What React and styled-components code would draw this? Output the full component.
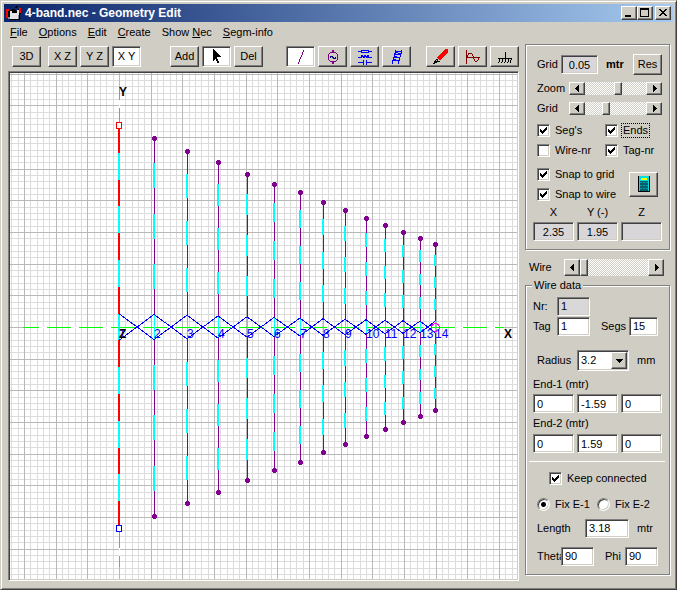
import React from 'react'
import styled, { createGlobalStyle, css } from 'styled-components'

const face = '#d0cdc5'
const shadow = '#808080'
const dark = '#404040'

const GlobalStyle = createGlobalStyle`
    * {
        box-sizing: border-box;
    }

    body {
        margin: 0;
        background: ${face};
        color: #000;
        font-family: 'Liberation Sans', Arial, sans-serif;
        font-size: 11px;
        line-height: 13px;
    }

    button, input, select {
        font: inherit;
        color: inherit;
        margin: 0;
        padding: 0;
        border-radius: 0;
    }
`

const raised = css`
    border: 1px solid;
    border-color: #fff ${dark} ${dark} #fff;
    box-shadow: inset -1px -1px 0 ${shadow};
    background: ${face};
`

const sunken = css`
    border: 1px solid;
    border-color: ${shadow} #fff #fff ${shadow};
    box-shadow: inset 1px 1px 0 ${dark}, inset -1px -1px 0 ${face};
`

const Window = styled.main`
    min-height: 100vh;
    padding: 2px;
    background: ${face};
    border: 1px solid;
    border-color: ${face} ${dark} ${dark} ${face};
    box-shadow: inset 1px 1px 0 #fff, inset -1px -1px 0 ${shadow};
`

const TitleBar = styled.header`
    display: flex;
    align-items: center;
    gap: 3px;
    height: 18px;
    margin: 1px;
    padding: 0 2px;
    background: linear-gradient(to right, #0a246a, #a6caf0);
    color: #fff;

    h1 {
        flex: 1;
        margin: 0;
        font-size: 12px;
        line-height: 18px;
    }
`

const CaptionButtons = styled.div`
    display: flex;

    button:last-child {
        margin-left: 2px;
    }
`

const CaptionButton = styled.button`
    ${raised}
    display: flex;
    width: 16px;
    height: 14px;
`

const MenuBar = styled.nav`
    display: flex;
    align-items: center;
    gap: 11px;
    height: 18px;
    padding: 0 7px;
    margin-bottom: 2px;

    a {
        color: inherit;
        text-decoration: none;
    }
`

const Body = styled.div`
    display: flex;
    align-items: flex-start;
    gap: 6px;
    padding: 1px 4px 6px 5px;
`

const Editor = styled.div`
    flex: 1;
    display: flex;
    flex-direction: column;
    gap: 4px;
    min-width: 0;
    padding-top: 2px;
`

const Toolbar = styled.div`
    display: flex;
    gap: 23px;
    padding-left: 4px;

    > :first-child {
        margin-right: 6px;
    }

    > :last-child {
        margin-left: auto;
    }
`

const Group = styled.div`
    display: flex;
    gap: ${p => p.$gap || 3}px;
`

const ToolButton = styled.button`
    ${raised}
    display: flex;
    align-items: center;
    justify-content: center;
    width: 29px;
    height: ${p => (p.$tall ? 25 : 21)}px;
    ${p =>
        p.$pressed &&
        css`
            ${sunken}
            background: #fff;
        `}
`

const View = styled.div`
    ${sunken}
    padding: 1px;
    background: #fff;

    svg {
        display: block;
        width: 100%;
    }
`

const Sidebar = styled.aside`
    flex: 0 0 145px;
    display: flex;
    flex-direction: column;
`

const Panel = styled.section`
    border: 1px solid ${shadow};
    box-shadow: 1px 1px 0 #fff, inset 1px 1px 0 #fff;
    padding: 9px 7px 8px;
`

const DataPanel = styled.fieldset`
    min-width: 0;
    margin: 2px 0 0;
    padding: 4px 7px 8px;
    border: 1px solid ${shadow};
    box-shadow: 1px 1px 0 #fff, inset 1px 1px 0 #fff;

    legend {
        padding: 0 2px;
        margin-left: -1px;
        background: ${face};
    }
`

const Row = styled.div`
    display: flex;
    align-items: center;
    gap: ${p => p.$gap || 0}px;
    height: ${p => p.$h || 20}px;
    margin-top: ${p => p.$top || 0}px;
    padding-left: ${p => p.$indent || 0}px;
    white-space: nowrap;
`

const Label = styled.label`
    flex: 0 0 ${p => (p.$w ? p.$w + 'px' : 'auto')};
    min-width: 0;
`

const Unit = styled.span`
    flex: 1;
    padding-left: 8px;
    font-weight: ${p => (p.$bold ? 'bold' : 'normal')};
`

const Readout = styled.output`
    ${sunken}
    display: block;
    width: ${p => p.$w || 41}px;
    height: 19px;
    background: #d8d6d8;
    line-height: 18px;
    text-align: center;
`

const Field = styled.input`
    ${sunken}
    width: ${p => p.$w || 41}px;
    height: 19px;
    padding: 0 3px;
    background: ${p => (p.readOnly ? '#d8d8d8' : '#fff')};
    outline: none;
`

const Triple = styled.div`
    display: grid;
    grid-template-columns: repeat(3, 41px);
    gap: 3px;
    margin-top: ${p => p.$top || 0}px;
    text-align: center;
`

const Check = styled.label`
    display: flex;
    align-items: center;
    gap: 4px;
    flex: 0 0 ${p => (p.$w ? p.$w + 'px' : 'auto')};

    input {
        ${sunken}
        appearance: none;
        width: 13px;
        height: 13px;
        background: #fff;
    }

    input:checked {
        background: #fff
            url("data:image/svg+xml,%3Csvg xmlns='http://www.w3.org/2000/svg' width='11' height='11' shape-rendering='crispEdges'%3E%3Cpath d='M2 4h1v3h-1zM3 5h1v3h-1zM4 6h1v3h-1zM5 5h1v3h-1zM6 4h1v3h-1zM7 3h1v3h-1zM8 2h1v3h-1z'/%3E%3C/svg%3E");
    }

    input[type='radio'] {
        border-radius: 50%;
    }

    input[type='radio']:checked {
        background: radial-gradient(circle, #000 0 2px, #fff 3px);
    }

    span {
        padding: 0 1px;
        outline: ${p => (p.$focused ? '1px dotted #000' : 'none')};
    }
`

const Scroll = styled.div`
    display: flex;
    width: ${p => p.$w}px;
    height: ${p => p.$h}px;

    button {
        ${raised}
        display: flex;
        align-items: center;
        justify-content: center;
        flex: 0 0 16px;
    }

    input {
        appearance: none;
        flex: 1;
        min-width: 0;
        height: 100%;
        background: repeating-conic-gradient(#fff 0 25%, ${face} 0 50%) 0 0 / 2px 2px;
    }

    input::-webkit-slider-thumb {
        ${raised}
        appearance: none;
        width: 8px;
        height: ${p => p.$h}px;
        border-radius: 0;
    }
`

const Combo = styled.div`
    ${sunken}
    display: flex;
    width: 52px;
    height: 21px;
    padding: 1px;
    background: #fff;

    select {
        appearance: none;
        flex: 1;
        min-width: 0;
        padding-left: 2px;
        border: 0;
        background: none;
        outline: none;
    }
`

const ComboArrow = styled.span`
    ${raised}
    display: flex;
    align-items: center;
    justify-content: center;
    width: 16px;
    pointer-events: none;
`

const Divider = styled.hr`
    width: 136px;
    margin: 8px -4px 6px;
    border: 0;
    border-top: 1px solid #fff;
`

const Icon = ({ w = 16, h = 16, children }) => (
    <svg width={w} height={h} viewBox={`0 0 ${w} ${h}`} fill="none" shapeRendering="crispEdges" aria-hidden="true">
        {children}
    </svg>
)

const Arrow = ({ d }) => (
    <Icon w={7} h={7}>
        <path d={d} fill="#000" />
    </Icon>
)
const LEFT = 'M5 0v7h-1v-1h-1v-1h-1v-1h-1v-1h1v-1h1v-1h1v-1z'
const RIGHT = 'M2 0v7h1v-1h1v-1h1v-1h1v-1h-1v-1h-1v-1h-1v-1z'
const DOWN = 'M0 2h7v1h-1v1h-1v1h-1v1h-1v-1h-1v-1h-1v-1h-1z'

function Scrollbar({ label, id, w, h, value }) {
    return (
        <Scroll $w={w} $h={h}>
            <button type="button" aria-label={label + ' down'}><Arrow d={LEFT} /></button>
            <input id={id} type="range" defaultValue={value} />
            <button type="button" aria-label={label + ' up'}><Arrow d={RIGHT} /></button>
        </Scroll>
    )
}

// Drawing area, in window pixels
const X0 = 119
const Y0 = 327
const AREA = { x: 10, y: 73, w: 507, h: 506 }
const STEP = 19 / 3

// x and half length of each element
const wires = [
    [119, 201], [154, 189], [187, 176], [218, 165], [247, 153],
    [274, 143], [300, 135], [323, 125], [345, 117], [366, 109],
    [385, 102], [403, 95], [420, 89], [435, 83]
]
const SEGS = 15

function gridLines(origin, start, size) {
    const lines = []
    for (let i = -60; i < 80; i++) {
        const at = Math.round(origin + i * STEP)
        if (at >= start && at < start + size) lines.push({ at, major: i % 5 === 0 })
    }
    return lines
}

function Grid() {
    const cols = gridLines(X0, AREA.x, AREA.w)
    const rows = gridLines(Y0, AREA.y, AREA.h)
    const draw = (major, fill) => (
        <g fill={fill}>
            {cols.filter(l => l.major === major).map(l => (
                <rect key={'c' + l.at} x={l.at} y={AREA.y} width="1" height={AREA.h} />
            ))}
            {rows.filter(l => l.major === major).map(l => (
                <rect key={'r' + l.at} x={AREA.x} y={l.at} width={AREA.w} height="1" />
            ))}
        </g>
    )
    return (
        <>
            {draw(false, '#dcdcdc')}
            {draw(true, '#b8b8b8')}
        </>
    )
}

function Wire({ x, half, first }) {
    const seg = (half * 2) / SEGS
    const parts = []
    for (let i = 0; i < SEGS; i++) {
        const cyan = i % 2 === 1
        const wide = first || (cyan && i !== 7)
        const top = Math.round(Y0 - half + i * seg)
        parts.push(
            <rect
                key={i}
                x={wide ? x - 1 : x}
                y={top}
                width={wide ? 2 : 1}
                height={Math.round(Y0 - half + (i + 1) * seg) - top}
                fill={cyan ? '#00ffff' : first ? '#ff0000' : '#800090'}
            />
        )
    }
    return <>{parts}</>
}

function End({ x, y }) {
    return <path d={`M${x - 1} ${y - 2}h3v1h1v3h-1v1h-3v-1h-1v-3h1z`} fill="#800090" />
}

function Drawing() {
    return (
        <svg
            viewBox={`${AREA.x} ${AREA.y} ${AREA.w} ${AREA.h}`}
            shapeRendering="crispEdges"
            role="img"
            aria-label="Antenna geometry, XY view"
        >
            <Grid />
            <path d="M23 327.5H504M119.5 87V567" stroke="#fff" />
            <path d="M23 327.5H504" stroke="#00ff00" strokeDasharray="24 8" strokeDashoffset="8" />
            <path d="M119.5 87V567" stroke="#00ff00" strokeDasharray="24 8" strokeDashoffset="11" />
            {wires.map(([x, half], i) => (
                <Wire key={x} x={x} half={half} first={i === 0} />
            ))}
            {wires.slice(1).map(([x, half], i) => {
                const [px, ph] = wires[i]
                const a = ph / SEGS
                const b = half / SEGS
                return (
                    <path
                        key={x}
                        d={`M${px} ${Y0 - a}L${x} ${Y0 + b}M${px} ${Y0 + a}L${x} ${Y0 - b}`}
                        stroke="#0000ff"
                    />
                )
            })}
            {wires.slice(1).map(([x, half]) => (
                <g key={x}>
                    <End x={x} y={Y0 - half} />
                    <End x={x} y={Y0 + half} />
                </g>
            ))}
            <rect x="116.5" y="122.5" width="5" height="6" fill="#fff" stroke="#ff0000" />
            <rect x="116.5" y="525.5" width="5" height="6" fill="#fff" stroke="#0000ff" />
            <circle cx="435.5" cy="327.5" r="4" fill="none" stroke="#ff00ff" />
            <g fill="#0000ff" fontSize="12">
                {wires.map(([x], i) => (
                    <text key={x} x={x} y="338">{i + 1}</text>
                ))}
            </g>
            <g fontWeight="bold" fontSize="12">
                <text x="119" y="96">Y</text>
                <text x="119" y="338">Z</text>
                <text x="504" y="338">X</text>
            </g>
        </svg>
    )
}

const Menu = ({ before = '', mnemonic, children }) => (
    <a href="#menu">
        {before}
        <u>{mnemonic}</u>
        {children}
    </a>
)

export default function App() {
    return (
        <>
            <GlobalStyle />
            <Window>
                <TitleBar>
                    <Icon>
                        <path d="M4 5h2v-1h2l2 2l3 -3h2v6h-1v6h-10v-2h-2v-7h2z" fill="#000" />
                        <path d="M0 4h3v2h-1v7h-2zM13 3h2v5h-2z" fill="#f00" />
                        <path d="M4 6h2v2h5v-3h2v9h-9z" fill="#e4e4e4" />
                        <path d="M7 5l2 2M9 3l3 -2" stroke="#000" />
                        <path d="M2 12h2v2h-2zM12 10h1v4h-1z" fill="#888" />
                    </Icon>
                    <h1>4-band.nec - Geometry Edit</h1>
                    <CaptionButtons>
                        <CaptionButton type="button" aria-label="Minimize">
                            <Icon w={14} h={12}><path d="M3 8h6v2h-6z" fill="#000" /></Icon>
                        </CaptionButton>
                        <CaptionButton type="button" aria-label="Maximize">
                            <Icon w={14} h={12}><path d="M2 1h9v9h-9zM3 3v6h7v-6z" fill="#000" fillRule="evenodd" /></Icon>
                        </CaptionButton>
                        <CaptionButton type="button" aria-label="Close">
                            <Icon w={14} h={12}>
                                <path d="M3 2h2v1h1v1h2v-1h1v-1h2v1h-1v1h-1v1h-1v1h1v1h1v1h1v1h-2v-1h-1v-1h-2v1h-1v1h-2v-1h1v-1h1v-1h1v-1h-1v-1h-1v-1h-1z" fill="#000" />
                            </Icon>
                        </CaptionButton>
                    </CaptionButtons>
                </TitleBar>
                <MenuBar>
                    <Menu mnemonic="F">ile</Menu>
                    <Menu mnemonic="O">ptions</Menu>
                    <Menu mnemonic="E">dit</Menu>
                    <Menu mnemonic="C">reate</Menu>
                    <Menu before="Show " mnemonic="N">ec</Menu>
                    <Menu mnemonic="S">egm-info</Menu>
                </MenuBar>
                <Body>
                    <Editor>
                        <Toolbar>
                            <Group $gap={7}>
                                <ToolButton type="button">3D</ToolButton>
                                <Group>
                                    <ToolButton type="button">X Z</ToolButton>
                                    <ToolButton type="button">Y Z</ToolButton>
                                    <ToolButton type="button" $pressed>X Y</ToolButton>
                                </Group>
                            </Group>
                            <Group>
                                <ToolButton type="button">Add</ToolButton>
                                <ToolButton type="button" $pressed aria-label="Select">
                                    <Icon>
                                        <path d="M4 0h1v1h1v1h1v1h1v1h1v1h1v1h1v1h1v1h-4v2h1v2h1v2h-2v-2h-1v-2h-1v1h-1v1h-1z" fill="#000" />
                                    </Icon>
                                </ToolButton>
                                <ToolButton type="button">Del</ToolButton>
                            </Group>
                            <Group $gap={15}>
                                <Group>
                                    <ToolButton type="button" $pressed aria-label="Wire">
                                        <Icon><path d="M5 15L11 1" stroke="#800080" /></Icon>
                                    </ToolButton>
                                    <ToolButton type="button" aria-label="Source">
                                        <Icon>
                                            <path d="M8 1v2M8 13v2" stroke="#800080" strokeWidth="2" />
                                            <circle cx="8" cy="8" r="5" stroke="#800080" />
                                            <path d="M5 8.5l1 -1h1l2 2h1l1 -1" stroke="#000080" />
                                        </Icon>
                                    </ToolButton>
                                    <ToolButton type="button" aria-label="Load">
                                        <Icon>
                                            <path d="M1 2.5h3M12 2.5h3M4.5 1.5h7v2h-7zM1 8.5h3l1 -2l2 2l1 -2l2 2l1 -2l1 2h3M1 13.5h5M10 13.5h5M6.5 11v5M9.5 11v5" stroke="#00f" />
                                        </Icon>
                                    </ToolButton>
                                    <ToolButton type="button" aria-label="Transmission line">
                                        <Icon>
                                            <path d="M3 15L7 1M9 15L13 1M6 2.5h7M5 5.5h7M5 8.5h6M4 11.5h6M7 3l4 2M6 7l4 2M5 10l4 2" stroke="#00f" />
                                        </Icon>
                                    </ToolButton>
                                </Group>
                                <Group>
                                    <ToolButton type="button" aria-label="Draw">
                                        <Icon w={17}>
                                            <path d="M13 0h3v3L8 12L5 9z" fill="#f00" />
                                            <path d="M1 15l4 -5M2 15l4 -3M5 10v2h3" stroke="#000" />
                                        </Icon>
                                    </ToolButton>
                                    <ToolButton type="button" aria-label="Plot">
                                        <Icon>
                                            <path d="M1.5 1v14M1 8.5h14" stroke="#800000" />
                                            <path d="M2.5 8.5C3.5 2.5 7 2.5 8.5 8.5C9.5 13.5 13 13.5 14 8.5" stroke="#800000" />
                                        </Icon>
                                    </ToolButton>
                                    <ToolButton type="button" aria-label="Ground">
                                        <Icon>
                                            <path d="M8.5 3v6M1 9.5h14M3.5 9l-2 5M6.5 9l-2 5M9.5 9l-2 5M12.5 9l-2 5M14.5 9l-1 5" stroke="#000" />
                                        </Icon>
                                    </ToolButton>
                                </Group>
                            </Group>
                        </Toolbar>
                        <View>
                            <Drawing />
                        </View>
                    </Editor>
                    <Sidebar>
                        <Panel>
                            <Row $indent={4}>
                                <Label $w={24} htmlFor="grid-size">Grid</Label>
                                <Readout id="grid-size" $w={37}>0.05</Readout>
                                <Unit $bold>mtr</Unit>
                                <ToolButton type="button">Res</ToolButton>
                            </Row>
                            <Row $top={4} $indent={4}>
                                <Label $w={32} htmlFor="zoom">Zoom</Label>
                                <Scrollbar id="zoom" label="Zoom" w={93} h={13} value={54} />
                            </Row>
                            <Row $indent={4}>
                                <Label $w={32} htmlFor="grid">Grid</Label>
                                <Scrollbar id="grid" label="Grid" w={93} h={13} value={33} />
                            </Row>
                            <Row $top={2} $indent={4}>
                                <Check $w={68}><input type="checkbox" defaultChecked /><span>Seg's</span></Check>
                                <Check $focused><input type="checkbox" defaultChecked /><span>Ends</span></Check>
                            </Row>
                            <Row $indent={4}>
                                <Check $w={68}><input type="checkbox" /><span>Wire-nr</span></Check>
                                <Check><input type="checkbox" defaultChecked /><span>Tag-nr</span></Check>
                            </Row>
                            <Row $top={4} $h={40} $indent={4} $gap={12}>
                                <div>
                                    <Row><Check><input type="checkbox" defaultChecked /><span>Snap to grid</span></Check></Row>
                                    <Row><Check><input type="checkbox" defaultChecked /><span>Snap to wire</span></Check></Row>
                                </div>
                                <ToolButton type="button" $tall aria-label="Calculator">
                                    <Icon w={14}>
                                        <path d="M1 0h12v16h-12z" fill="#000" />
                                        <path d="M2 0h10v15h-10z" fill="#00e0e0" />
                                        <path d="M4 2h6v2h-6z" fill="#ff0" />
                                        <path d="M3 5h8v10h-8z" fill="#006070" />
                                        <path d="M3 6h2v1h-2zM6 6h2v1h-2zM9 6h2v1h-2zM3 9h2v1h-2zM6 9h2v1h-2zM9 9h2v1h-2zM3 12h2v1h-2zM6 12h2v1h-2zM9 12h2v1h-2z" fill="#00a0a0" />
                                    </Icon>
                                </ToolButton>
                            </Row>
                            <Triple $top={2}>
                                <Label htmlFor="pos-x">X</Label>
                                <Label htmlFor="pos-y">Y (-)</Label>
                                <Label htmlFor="pos-z">Z</Label>
                                <Readout id="pos-x">2.35</Readout>
                                <Readout id="pos-y">1.95</Readout>
                                <Readout id="pos-z" />
                            </Triple>
                        </Panel>
                        <Row $top={7} $indent={4}>
                            <Label $w={35} htmlFor="wire">Wire</Label>
                            <Scrollbar id="wire" label="Wire" w={100} h={17} value={0} />
                        </Row>
                        <DataPanel>
                            <legend>Wire data</legend>
                            <Row>
                                <Label $w={24} htmlFor="nr">Nr:</Label>
                                <Field id="nr" $w={33} defaultValue="1" readOnly />
                            </Row>
                            <Row>
                                <Label $w={24} htmlFor="tag">Tag</Label>
                                <Field id="tag" $w={33} defaultValue="1" />
                                <Row $indent={11}>
                                    <Label $w={28} htmlFor="segs">Segs</Label>
                                    <Field id="segs" $w={29} defaultValue="15" />
                                </Row>
                            </Row>
                            <Row $top={14} $indent={4}>
                                <Label $w={40} htmlFor="radius">Radius</Label>
                                <Combo>
                                    <select id="radius" defaultValue="3.2">
                                        <option>3.2</option>
                                    </select>
                                    <ComboArrow><Arrow d={DOWN} /></ComboArrow>
                                </Combo>
                                <Unit>mm</Unit>
                            </Row>
                            <Row $top={4}><Label htmlFor="x1">End-1 (mtr)</Label></Row>
                            <Triple>
                                <Field id="x1" defaultValue="0" />
                                <Field aria-label="End-1 Y" defaultValue="-1.59" />
                                <Field aria-label="End-1 Z" defaultValue="0" />
                            </Triple>
                            <Row $h={21}><Label htmlFor="x2">End-2 (mtr)</Label></Row>
                            <Triple>
                                <Field id="x2" defaultValue="0" />
                                <Field aria-label="End-2 Y" defaultValue="1.59" />
                                <Field aria-label="End-2 Z" defaultValue="0" />
                            </Triple>
                            <Divider />
                            <Row $indent={16}>
                                <Check><input type="checkbox" defaultChecked /><span>Keep connected</span></Check>
                            </Row>
                            <Row $top={6} $indent={4}>
                                <Check $w={60}><input type="radio" name="fix" defaultChecked /><span>Fix E-1</span></Check>
                                <Check><input type="radio" name="fix" /><span>Fix E-2</span></Check>
                            </Row>
                            <Row $top={4} $indent={4}>
                                <Label $w={48} htmlFor="length">Length</Label>
                                <Field id="length" $w={44} defaultValue="3.18" />
                                <Unit>mtr</Unit>
                            </Row>
                            <Row $top={8} $indent={4}>
                                <Label $w={24} htmlFor="theta">Theta</Label>
                                <Field id="theta" $w={33} defaultValue="90" />
                                <Row $indent={11}>
                                    <Label $w={20} htmlFor="phi">Phi</Label>
                                    <Field id="phi" $w={33} defaultValue="90" />
                                </Row>
                            </Row>
                        </DataPanel>
                    </Sidebar>
                </Body>
            </Window>
        </>
    )
}
